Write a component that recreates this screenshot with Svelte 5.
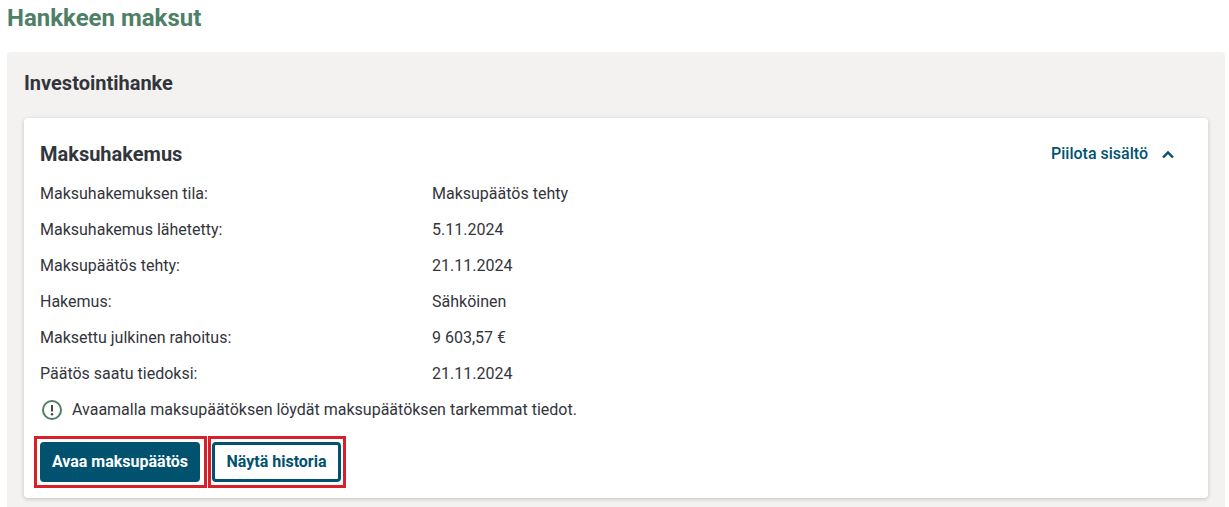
<script>
  const rows = [
    ['Maksuhakemuksen tila:', 'Maksupäätös tehty'],
    ['Maksuhakemus lähetetty:', '5.11.2024'],
    ['Maksupäätös tehty:', '21.11.2024'],
    ['Hakemus:', 'Sähköinen'],
    ['Maksettu julkinen rahoitus:', '9 603,57 €'],
    ['Päätös saatu tiedoksi:', '21.11.2024']
  ];
</script>

<main class="page">
  <h1>Hankkeen maksut</h1>

  <section class="panel">
    <h2>Investointihanke</h2>

    <article class="card">
      <header class="card-head">
        <h3>Maksuhakemus</h3>
        <button class="toggle">
          Piilota sisältö
          <svg width="14" height="9" viewBox="0 0 14 9" fill="none" aria-hidden="true">
            <path d="M2 7.5 7 2.5l5 5" stroke="currentColor" stroke-width="2.4" />
          </svg>
        </button>
      </header>

      <dl class="rows">
        {#each rows as [label, value]}
          <div class="row">
            <dt>{label}</dt>
            <dd>{value}</dd>
          </div>
        {/each}
      </dl>

      <p class="note">
        <svg width="20" height="20" viewBox="0 0 20 20" fill="none" aria-hidden="true">
          <circle cx="10" cy="10" r="9" stroke="#4f7f66" stroke-width="2" />
          <path d="M10 5v6.4" stroke="#3d4a47" stroke-width="2" />
          <circle cx="10" cy="14.3" r="1.2" fill="#3d4a47" />
        </svg>
        Avaamalla maksupäätöksen löydät maksupäätöksen tarkemmat tiedot.
      </p>

      <div class="actions">
        <span class="mark first"><button class="btn primary">Avaa maksupäätös</button></span>
        <span class="mark second"><button class="btn secondary">Näytä historia</button></span>
      </div>
    </article>
  </section>
</main>

<style>
  :global(body) {
    margin: 0;
    background: #fff;
  }

  .page {
    height: 507px;
    overflow: hidden;
    box-sizing: border-box;
    padding: 0 4px 0 7px;
    font-family: Roboto, "Liberation Sans", sans-serif;
    font-size: 16px;
    color: #33353c;
  }

  h1 {
    margin: 0;
    padding-top: 4px;
    height: 52px;
    box-sizing: border-box;
    font-size: 24px;
    line-height: 28px;
    font-weight: 700;
    color: #4f7f66;
  }

  .panel {
    height: 455px;
    box-sizing: border-box;
    padding: 0 17px;
    background: #f3f2f1;
    border-radius: 4px 4px 0 0;
  }

  h2 {
    margin: 0;
    height: 66px;
    box-sizing: border-box;
    padding-top: 20px;
    font-size: 20px;
    line-height: 23px;
    font-weight: 700;
  }

  .card {
    height: 380px;
    box-sizing: border-box;
    padding: 0 16px;
    background: #fff;
    border-radius: 4px;
    box-shadow: 0 1px 4px rgba(0, 0, 0, 0.2);
  }

  .card-head {
    display: flex;
    align-items: center;
    justify-content: space-between;
    height: 58px;
    padding: 14px 17px 0 0;
    box-sizing: border-box;
  }

  h3 {
    margin: 0;
    font-size: 20px;
    line-height: 23px;
    font-weight: 700;
  }

  .toggle {
    display: flex;
    align-items: center;
    gap: 13px;
    padding: 0;
    border: 0;
    background: none;
    font: 500 16px/20px Roboto, sans-serif;
    color: #00526f;
  }

  .rows {
    margin: 0;
  }

  .row {
    display: grid;
    grid-template-columns: 392px 1fr;
    height: 36px;
    line-height: 36px;
  }

  dd {
    margin: 0;
  }

  .note {
    display: flex;
    align-items: center;
    gap: 10px;
    height: 35px;
    margin: 0;
    padding-left: 2px;
  }

  .actions {
    display: flex;
    gap: 1px;
    margin: 9px 0 0 -6px;
  }

  .mark {
    display: block;
    border: 3px solid #d8202b;
  }

  .first {
    padding: 3px 4px 3px 3px;
  }

  .second {
    padding: 3px 2px 3px 1px;
  }

  .btn {
    display: block;
    height: 40px;
    box-sizing: border-box;
    border-radius: 4px;
    font: 700 16px/20px Roboto, sans-serif;
  }

  .primary {
    width: 160px;
    border: 0;
    background: #00526f;
    color: #fff;
  }

  .secondary {
    width: 129px;
    border: 3px solid #00526f;
    background: #fff;
    color: #00526f;
  }
</style>
